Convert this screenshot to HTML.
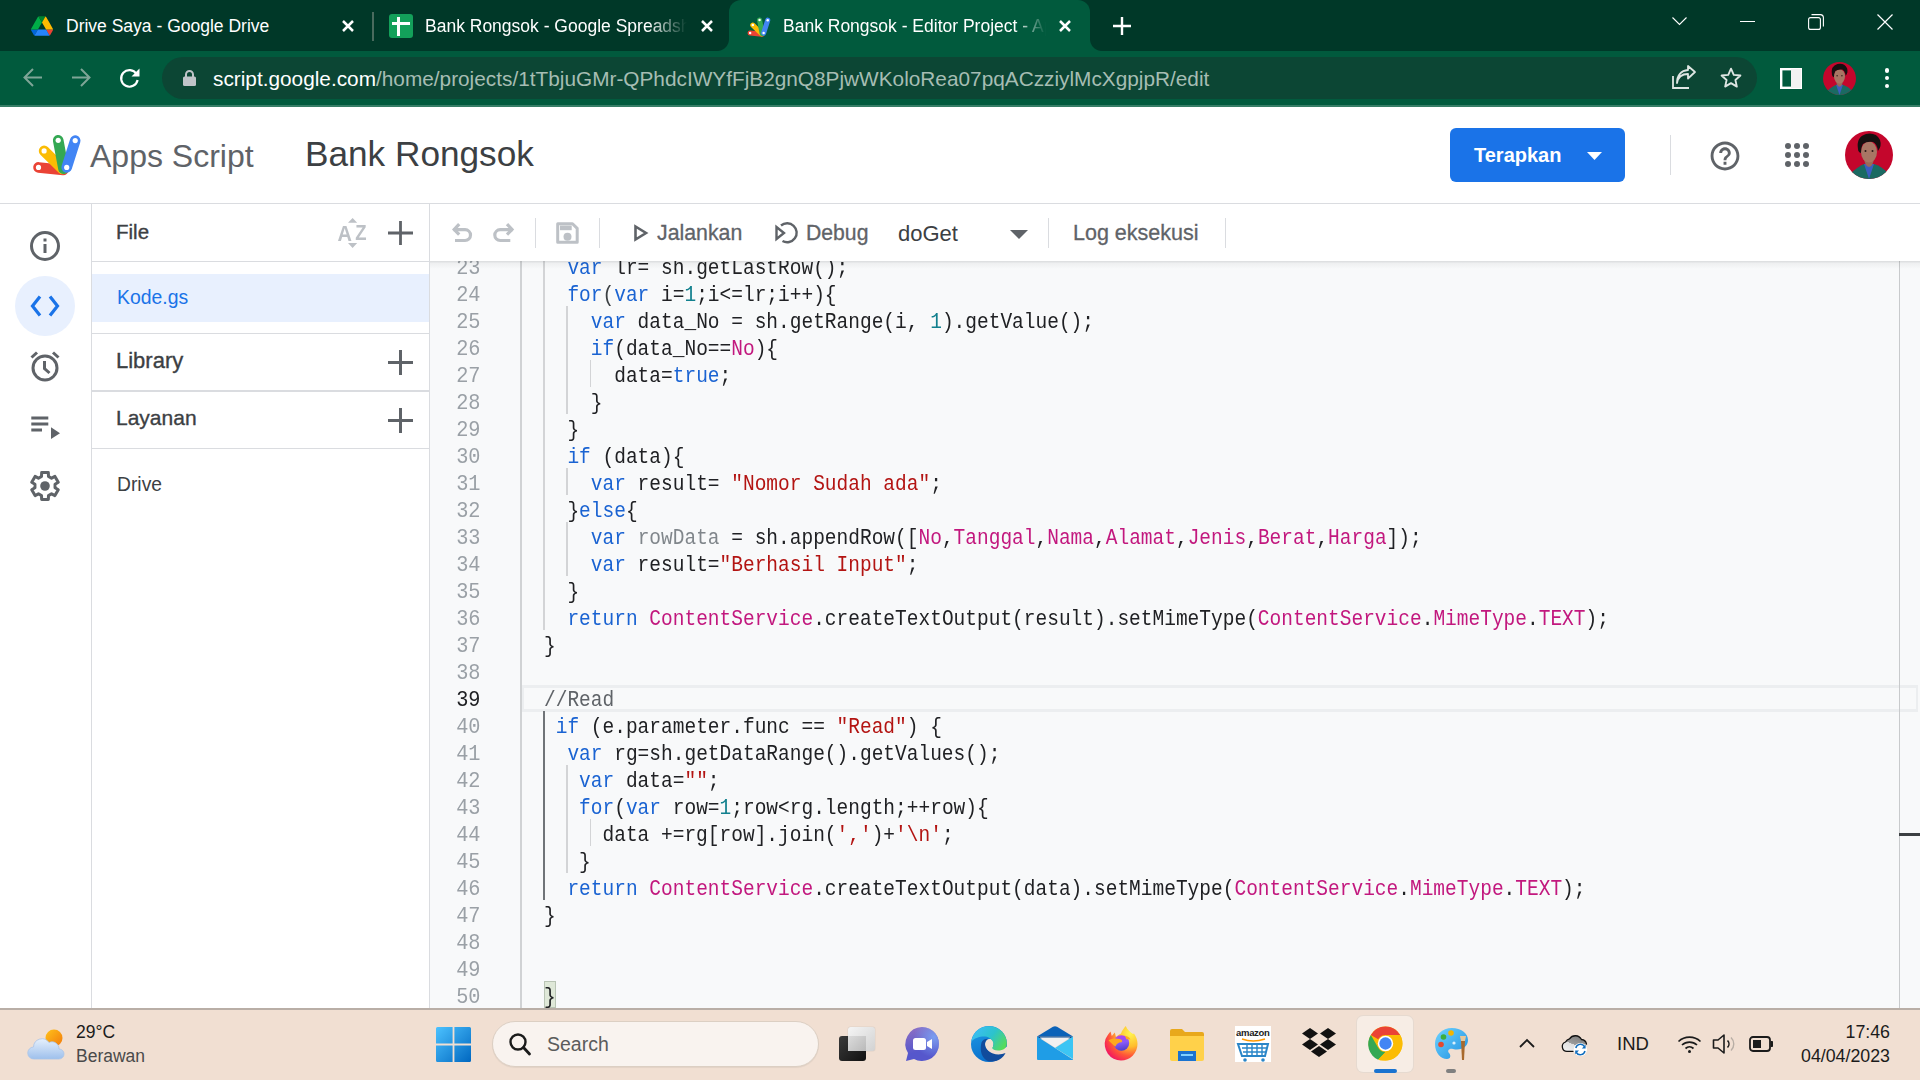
<!DOCTYPE html>
<html><head><meta charset="utf-8">
<style>
*{margin:0;padding:0;box-sizing:border-box}
html,body{width:1920px;height:1080px;overflow:hidden;background:#fff;font-family:"Liberation Sans",sans-serif}
.a{position:absolute}
svg{position:absolute;overflow:visible}
/* chrome */
#tabbar{left:0;top:0;width:1920px;height:51px;background:#003828}
#toolbar{left:0;top:51px;width:1920px;height:54px;background:#015a3d}
#tbline{left:0;top:105px;width:1920px;height:2px;background:#367d66}
.tabtxt{color:#fff;font-size:17.5px;white-space:nowrap;top:15px;line-height:22px}
#omni{left:162px;top:57px;width:1595px;height:42px;border-radius:21px;background:#0c4634}
/* app header */
#hdr{left:0;top:107px;width:1920px;height:97px;background:#fff;border-bottom:1px solid #dadce0}
/* rail + panel */
#rail{left:0;top:204px;width:92px;height:804px;background:#fff;border-right:1px solid #dadce0}
#panel{left:92px;top:204px;width:338px;height:804px;background:#fff;border-right:1px solid #dadce0}
.ph{color:#3c4043;font-size:20px;-webkit-text-stroke:0.35px #3c4043;white-space:nowrap}
.hl{left:0;width:337px;height:1px;background:#dadce0}
/* toolbar */
#etb{left:430px;top:204px;width:1490px;height:57px;background:#fff}
.tt{color:#5f6368;font-size:21.5px;white-space:nowrap;-webkit-text-stroke:0.3px #5f6368}
.sep{width:1px;background:#dadce0}
/* code */
#code{left:430px;top:261px;width:1490px;height:747px;background:#f8f9fa;overflow:hidden}
.ln{position:absolute;left:0;width:50.5px;text-align:right;font-family:"Liberation Mono",monospace;font-size:19.5px;color:#9aa0a6;line-height:27px;height:27px;transform:scale(1.04,1.15);transform-origin:100% 18.7px}
.cl{position:absolute;left:114px;font-family:"Liberation Mono",monospace;font-size:19.5px;color:#202124;line-height:27px;height:27px;white-space:pre;transform:scaleY(1.11);transform-origin:0 18.7px}
.k{color:#1a63d2}.s{color:#b31412}.m{color:#c2187e}.n{color:#12808e}.g{color:#80868b}.p{color:#3c4043}.c{color:#5f6368}
.guide{position:absolute;width:1.5px;background:#d3d4d6}
/* taskbar */
#task{left:0;top:1008px;width:1920px;height:72px;background:#f1dfd2;border-top:2px solid #b9aea6}
</style></head><body>

<!-- ================= CHROME TAB BAR ================= -->
<div id="tabbar" class="a"></div>
<!-- active tab -->
<div class="a" style="left:729px;top:0;width:361px;height:51px;background:#015a3d;border-radius:12px 12px 0 0"></div>
<div class="a" style="left:717px;top:39px;width:12px;height:12px;background:radial-gradient(circle at 0 0,#003828 11.5px,#015a3d 12.5px)"></div>
<div class="a" style="left:1090px;top:39px;width:12px;height:12px;background:radial-gradient(circle at 100% 0,#003828 11.5px,#015a3d 12.5px)"></div>


<!-- tab 1 -->
<svg style="left:31px;top:16px" width="22" height="20" viewBox="0 0 87.3 78">
<path d="m6.6 66.85 3.85 6.65c.8 1.4 1.95 2.5 3.3 3.3l13.75-23.8h-27.5c0 1.55.4 3.1 1.2 4.5z" fill="#0066da"/>
<path d="m43.65 25-13.75-23.8c-1.35.8-2.5 1.9-3.3 3.3l-25.4 44a9.06 9.06 0 0 0 -1.2 4.5h27.5z" fill="#00ac47"/>
<path d="m73.55 76.8c1.35-.8 2.5-1.9 3.3-3.3l1.6-2.75 7.65-13.25c.8-1.4 1.2-2.95 1.2-4.5h-27.502l5.852 11.5z" fill="#ea4335"/>
<path d="m43.65 25 13.75-23.8c-1.35-.8-2.9-1.2-4.5-1.2h-18.5c-1.6 0-3.15.45-4.5 1.2z" fill="#00832d"/>
<path d="m59.8 53h-32.3l-13.75 23.8c1.35.8 2.9 1.2 4.5 1.2h50.8c1.6 0 3.15-.45 4.5-1.2z" fill="#2684fc"/>
<path d="m73.4 26.5-12.7-22c-.8-1.4-1.95-2.5-3.3-3.3l-13.75 23.8 16.15 28h27.45c0-1.55-.4-3.1-1.2-4.5z" fill="#ffba00"/>
</svg>
<div class="a tabtxt" style="left:66px">Drive Saya - Google Drive</div>
<svg style="left:342px;top:20px" width="12" height="12" viewBox="0 0 12 12"><path d="M1 1L11 11M11 1L1 11" stroke="#fff" stroke-width="2.5"/></svg>
<div class="a" style="left:372px;top:12px;width:1.5px;height:29px;background:#4a6b5e"></div>
<!-- tab 2 -->
<div class="a" style="left:389px;top:14px;width:24px;height:24px;background:#13a05a;border-radius:3px"></div>
<div class="a" style="left:392px;top:22.2px;width:18px;height:2.8px;background:#fff"></div>
<div class="a" style="left:397px;top:17px;width:3.2px;height:19px;background:#fff"></div>
<div class="a tabtxt" style="left:425px;width:262px;overflow:hidden;-webkit-mask-image:linear-gradient(90deg,#000 85%,transparent)">Bank Rongsok - Google Spreadsheet</div>
<svg style="left:701px;top:20px" width="12" height="12" viewBox="0 0 12 12"><path d="M1 1L11 11M11 1L1 11" stroke="#fff" stroke-width="2.5"/></svg>
<!-- tab 3 (active) -->
<svg style="left:747px;top:17px" width="24" height="19.2" viewBox="0 0 50 40">
<g stroke-linecap="round" stroke-width="10.6">
<path d="M6.5 33.4L31.3 36" stroke="#ea4335"/>
<path d="M12.1 16.9L30.5 35" stroke="#fbbc04"/>
<path d="M26.2 6.3L31.5 34.7" stroke="#34a853"/>
<path d="M43.2 6.6L34.7 33.4" stroke="#4285f4"/>
</g>
<g fill="#fff"><circle cx="6.5" cy="33.4" r="2.6"/><circle cx="12.1" cy="16.9" r="2.6"/><circle cx="26.2" cy="6.3" r="2.6"/><circle cx="43.2" cy="6.6" r="2.6"/><circle cx="34.7" cy="33.4" r="2.6"/></g>
</svg>
<div class="a tabtxt" style="left:783px;width:263px;overflow:hidden;-webkit-mask-image:linear-gradient(90deg,#000 88%,transparent)">Bank Rongsok - Editor Project - Apps Script</div>
<svg style="left:1059px;top:20px" width="12" height="12" viewBox="0 0 12 12"><path d="M1 1L11 11M11 1L1 11" stroke="#fff" stroke-width="2.5"/></svg>
<svg style="left:1113px;top:17px" width="18" height="18" viewBox="0 0 18 18"><path d="M9 0V18M0 9H18" stroke="#fff" stroke-width="2.4"/></svg>
<!-- window controls -->
<svg style="left:1672px;top:16px" width="15" height="10" viewBox="0 0 15 10"><path d="M0.5 1.5L7.5 8.5L14.5 1.5" stroke="#fff" stroke-width="1.1" fill="none"/></svg>
<div class="a" style="left:1740px;top:21px;width:15px;height:1.2px;background:#fff"></div>
<svg style="left:1808px;top:14px" width="16" height="16" viewBox="0 0 16 16"><rect x="0.6" y="3.6" width="11.8" height="11.8" rx="2" stroke="#fff" stroke-width="1.1" fill="none"/><path d="M3.5 0.6H12.5A3 3 0 0 1 15.4 3.5V12.5" stroke="#fff" stroke-width="1.1" fill="none"/></svg>
<svg style="left:1877px;top:14px" width="16" height="16" viewBox="0 0 16 16"><path d="M0.5 0.5L15.5 15.5M15.5 0.5L0.5 15.5" stroke="#fff" stroke-width="1.2"/></svg>

<!-- ================= CHROME TOOLBAR ================= -->
<div id="toolbar" class="a"></div>
<div id="tbline" class="a"></div>
<svg style="left:23px;top:68px" width="20" height="19" viewBox="0 0 20 19"><path d="M19 9.5H2M10 1L1.5 9.5L10 18" stroke="#7fa597" stroke-width="2" fill="none"/></svg>
<svg style="left:71px;top:68px" width="20" height="19" viewBox="0 0 20 19"><path d="M1 9.5H18M10 1L18.5 9.5L10 18" stroke="#7fa597" stroke-width="2" fill="none"/></svg>
<svg style="left:119px;top:68px" width="22" height="20" viewBox="0 0 22 20"><path d="M17.5 6A8.3 8.3 0 1 0 18.6 12" stroke="#fff" stroke-width="2.2" fill="none"/><path d="M20.5 0.5V8.5H12.5Z" fill="#fff"/></svg>
<div id="omni" class="a"></div>
<svg style="left:183px;top:70px" width="13" height="16" viewBox="0 0 13 16"><path d="M3 7V4.5A3.5 3.5 0 0 1 10 4.5V7" stroke="#c0c4c8" stroke-width="2" fill="none"/><rect x="0" y="6.5" width="13" height="9.5" rx="1.5" fill="#c0c4c8"/></svg>
<div class="a" style="left:213px;top:67px;font-size:20.8px;line-height:24px;white-space:nowrap;color:#a6bdb3"><span style="color:#fff">script.google.com</span>/home/projects/1tTbjuGMr-QPhdcIWYfFjB2gnQ8PjwWKoloRea07pqACzziylMcXgpjpR/edit</div>
<svg style="left:1672px;top:66px" width="24" height="23" viewBox="0 0 24 23"><path d="M1 10V22H17" stroke="#dfe6e3" stroke-width="1.8" fill="none"/><path d="M5 17C6 11 10 8 16 8V12.5L23 6L16 0V4C9 4.5 5 9.5 5 17Z" stroke="#dfe6e3" stroke-width="1.8" fill="none" stroke-linejoin="round"/></svg>
<svg style="left:1720px;top:67px" width="22" height="22" viewBox="0 0 24 24"><path d="M12 1.8L15 8.6L22.3 9.3L16.8 14.2L18.4 21.4L12 17.6L5.6 21.4L7.2 14.2L1.7 9.3L9 8.6Z" stroke="#dfe6e3" stroke-width="2" fill="none" stroke-linejoin="round"/></svg>
<svg style="left:1780px;top:68px" width="22" height="21" viewBox="0 0 22 21"><rect x="1.2" y="1.2" width="19.6" height="18.6" stroke="#fff" stroke-width="2.4" fill="none"/><rect x="11" y="1" width="10" height="19" fill="#f2f2f2"/></svg>
<svg style="left:1823px;top:62px" width="33" height="33" viewBox="0 0 48 48">
<defs><clipPath id="avc2"><circle cx="24" cy="24" r="24"/></clipPath></defs>
<g clip-path="url(#avc2)">
<rect width="48" height="48" fill="#c4062c"/>
<path d="M3 48L6 42Q14 35 19 33H29Q36 35 43 42L46 48Z" fill="#1b6a62"/>
<path d="M19 33L24 48L29 33Z" fill="#3d5cc0"/>
<path d="M19 28Q20 35 24 36Q28 35 29 28Z" fill="#9a6a58"/>
<ellipse cx="24" cy="21" rx="8" ry="10.5" fill="#a87664"/>
<path d="M13 18Q11 6 21 3Q31 1 35 9Q37 15 33 20Q32 13 28 11Q22 10 18 13Q16 16 16 22Q13 21 13 18Z" fill="#151010"/>
<circle cx="20.5" cy="20" r="1" fill="#2a1a18"/><circle cx="27.5" cy="20" r="1" fill="#2a1a18"/>
</g></svg>
<div class="a" style="left:1884.7px;top:68px;width:4.6px;height:4.6px;border-radius:50%;background:#fff"></div>
<div class="a" style="left:1884.7px;top:75.7px;width:4.6px;height:4.6px;border-radius:50%;background:#fff"></div>
<div class="a" style="left:1884.7px;top:83.5px;width:4.6px;height:4.6px;border-radius:50%;background:#fff"></div>


<!-- ================= APP HEADER ================= -->
<div id="hdr" class="a"></div>
<svg style="left:32px;top:134px" width="50" height="40" viewBox="0 0 50 40">
<g stroke-linecap="round" stroke-width="10.6">
<path d="M6.5 33.4L31.3 36" stroke="#ea4335"/>
<path d="M12.1 16.9L30.5 35" stroke="#fbbc04"/>
<path d="M26.2 6.3L31.5 34.7" stroke="#34a853"/>
<path d="M43.2 6.6L34.7 33.4" stroke="#4285f4"/>
</g>
<g fill="#fff"><circle cx="6.5" cy="33.4" r="2.6"/><circle cx="12.1" cy="16.9" r="2.6"/><circle cx="26.2" cy="6.3" r="2.6"/><circle cx="43.2" cy="6.6" r="2.6"/><circle cx="34.7" cy="33.4" r="2.6"/></g>
</svg>
<div class="a" style="left:90px;top:136px;font-size:32px;line-height:40px;color:#5f6368;white-space:nowrap">Apps Script</div>
<div class="a" style="left:305px;top:132px;font-size:35.2px;line-height:44px;color:#3c4043;white-space:nowrap">Bank Rongsok</div>
<div class="a" style="left:1450px;top:128px;width:175px;height:54px;border-radius:6px;background:#1a73e8"></div>
<div class="a" style="left:1474px;top:143px;font-size:20px;font-weight:bold;line-height:24px;color:#fff;white-space:nowrap">Terapkan</div>
<svg style="left:1587px;top:152px" width="15" height="8" viewBox="0 0 15 8"><path d="M0 0H15L7.5 8Z" fill="#fff"/></svg>
<div class="a" style="left:1670px;top:135px;width:1px;height:40px;background:#dadce0"></div>
<svg style="left:1709px;top:140px" width="32" height="32" viewBox="0 0 24 24"><path fill="#5f6368" d="M11 18h2v-2h-2v2zm1-16C6.48 2 2 6.48 2 12s4.48 10 10 10 10-4.48 10-10S17.52 2 12 2zm0 18c-4.41 0-8-3.59-8-8s3.59-8 8-8 8 3.59 8 8-3.59 8-8 8zm0-14c-2.21 0-4 1.79-4 4h2c0-1.1.9-2 2-2s2 .9 2 2c0 2-3 1.75-3 5h2c0-2.25 3-2.5 3-5 0-2.21-1.79-4-4-4z" transform="translate(12 12) scale(1.08) translate(-12 -12)"/></svg>
<svg style="left:1785px;top:143px" width="24" height="24" viewBox="0 0 24 24"><g fill="#5f6368"><circle cx="3" cy="3" r="3"/><circle cx="12" cy="3" r="3"/><circle cx="21" cy="3" r="3"/><circle cx="3" cy="12" r="3"/><circle cx="12" cy="12" r="3"/><circle cx="21" cy="12" r="3"/><circle cx="3" cy="21" r="3"/><circle cx="12" cy="21" r="3"/><circle cx="21" cy="21" r="3"/></g></svg>
<svg style="left:1845px;top:131px" width="48" height="48" viewBox="0 0 48 48">
<defs><clipPath id="avc"><circle cx="24" cy="24" r="24"/></clipPath></defs>
<g clip-path="url(#avc)">
<rect width="48" height="48" fill="#c4062c"/>
<path d="M3 48L6 42Q14 35 19 33H29Q36 35 43 42L46 48Z" fill="#1b6a62"/>
<path d="M19 33L24 48L29 33Z" fill="#3d5cc0"/>
<path d="M19 28Q20 35 24 36Q28 35 29 28Z" fill="#9a6a58"/>
<ellipse cx="24" cy="21" rx="8" ry="10.5" fill="#a87664"/>
<path d="M13 18Q11 6 21 3Q31 1 35 9Q37 15 33 20Q32 13 28 11Q22 10 18 13Q16 16 16 22Q13 21 13 18Z" fill="#151010"/>
<circle cx="20.5" cy="20" r="1" fill="#2a1a18"/><circle cx="27.5" cy="20" r="1" fill="#2a1a18"/>
</g></svg>


<!-- ================= LEFT RAIL ================= -->
<div id="rail" class="a"></div>
<svg style="left:30px;top:231px" width="30" height="30" viewBox="0 0 30 30"><circle cx="15" cy="15" r="13.5" stroke="#5f6368" stroke-width="3" fill="none"/><rect x="13.5" y="13" width="3" height="9" fill="#5f6368"/><rect x="13.5" y="7.5" width="3" height="3" fill="#5f6368"/></svg>
<div class="a" style="left:15px;top:276px;width:60px;height:60px;border-radius:50%;background:#e8f0fe"></div>
<svg style="left:30px;top:294px" width="30" height="24" viewBox="0 0 30 24"><path d="M10 2.5L2.5 12L10 21.5M20 2.5L27.5 12L20 21.5" stroke="#1a73e8" stroke-width="3.2" fill="none"/></svg>
<svg style="left:29px;top:350px" width="32" height="32" viewBox="0 0 32 32"><circle cx="16" cy="18" r="12" stroke="#5f6368" stroke-width="3" fill="none"/><path d="M15.5 11V18.5L20.5 23" stroke="#5f6368" stroke-width="3" fill="none"/><path d="M2.5 7.5L8 2.5M29.5 7.5L24 2.5" stroke="#5f6368" stroke-width="3"/></svg>
<svg style="left:31px;top:416px" width="30" height="24" viewBox="0 0 30 24"><path d="M0.3 2.1H17.3M0.3 8.1H17.3M0.3 14.1H11" stroke="#5f6368" stroke-width="3"/><path d="M20 11.3V23L29 17.15Z" fill="#5f6368"/></svg>
<svg style="left:27px;top:468px" width="36" height="36" viewBox="0 0 36 36"><path d="M21.49 8.42L21.34 4.61L14.66 4.61L14.51 8.42L11.44 10.19L8.07 8.41L4.73 14.20L7.95 16.23L7.95 19.77L4.73 21.80L8.07 27.59L11.44 25.81L14.51 27.58L14.66 31.39L21.34 31.39L21.49 27.58L24.56 25.81L27.93 27.59L31.27 21.80L28.05 19.77L28.05 16.23L31.27 14.20L27.93 8.41L24.56 10.19Z" stroke="#5f6368" stroke-width="3" fill="none" stroke-linejoin="round"/><circle cx="18" cy="18" r="4.8" fill="#5f6368"/></svg>

<!-- ================= FILE PANEL ================= -->
<div id="panel" class="a">
<div class="a ph" style="left:24px;top:16px;line-height:24px;font-size:20.5px">File</div>
<div class="a" style="left:245.5px;top:17.6px;font-size:20px;font-weight:bold;color:#bdc1c6;line-height:24px;transform:scaleY(1.12);transform-origin:0 19px">A</div><div class="a" style="left:263.3px;top:17.6px;font-size:18.5px;font-weight:bold;color:#bdc1c6;line-height:24px;transform:scale(1,1.2);transform-origin:0 19px">Z</div>
<svg style="left:256px;top:10px" width="10" height="34" viewBox="0 0 10 34"><path d="M0 8.8L4.6 4L9.2 8.8Z M0 29L4.6 33.9L9.2 29Z" fill="#bdc1c6"/></svg>
<svg style="left:296px;top:17px" width="25" height="24" viewBox="0 0 25 24"><path d="M12.5 0V24M0 12H25" stroke="#5f6368" stroke-width="2.8"/></svg>
<div class="hl a" style="top:57px"></div>
<div class="a" style="left:0;top:70px;width:337px;height:48px;background:#e8f0fe"></div>
<div class="a" style="left:25px;top:81px;font-size:19.4px;line-height:24px;color:#1a73e8;white-space:nowrap">Kode.gs</div>
<div class="hl a" style="top:129px"></div>
<div class="a ph" style="left:24px;top:145px;line-height:24px;font-size:22px">Library</div>
<svg style="left:296px;top:146px" width="25" height="25" viewBox="0 0 25 25"><path d="M12.5 0V25M0 12.5H25" stroke="#5f6368" stroke-width="3"/></svg>
<div class="hl a" style="top:186px;height:2px"></div>
<div class="a ph" style="left:24px;top:202px;line-height:24px;font-size:21px">Layanan</div>
<svg style="left:296px;top:204px" width="25" height="25" viewBox="0 0 25 25"><path d="M12.5 0V25M0 12.5H25" stroke="#5f6368" stroke-width="3"/></svg>
<div class="hl a" style="top:244px"></div>
<div class="a" style="left:25px;top:269px;font-size:19.3px;line-height:24px;color:#3c4043;white-space:nowrap">Drive</div>
</div>

<!-- ================= EDITOR TOOLBAR ================= -->
<div id="etb" class="a"></div>
<svg style="left:0;top:0" width="1" height="1" viewBox="0 0 1 1"><g stroke="#bdc1c6" stroke-width="3.2" fill="none">
<path d="M459.2 224.1L454.2 229.4L459.2 234.6"/><path d="M453.5 229.7H465.1A5.4 5.4 0 0 1 465.1 240.5H455"/>
<path d="M507 224.1L512 229.4L507 234.6"/><path d="M512.7 229.7H500.2A5.4 5.4 0 0 0 500.2 240.5H510.3"/>
</g>
<path d="M557.7 223.7H572.5L577.2 228.4V242.2H557.7Z" stroke="#bdc1c6" stroke-width="3" fill="none" stroke-linejoin="round"/>
<rect x="560" y="225.5" width="11.7" height="4.7" fill="#bdc1c6"/><circle cx="567.5" cy="236.7" r="4" fill="#bdc1c6"/>
</svg>
<div class="a sep" style="left:535px;top:218px;height:30px"></div>
<div class="a sep" style="left:599px;top:218px;height:30px"></div>
<svg style="left:634px;top:224px" width="14" height="18" viewBox="0 0 14 18"><path d="M1.5 2.5V15.5L12 9Z" stroke="#5f6368" stroke-width="2.6" fill="none" stroke-linejoin="miter"/></svg>
<div class="a tt" style="left:657px;top:221px;line-height:24px;font-size:21.3px">Jalankan</div>
<svg style="left:775px;top:222px" width="23" height="22" viewBox="0 0 23 22"><path d="M1.5 5V17L9 11Z" stroke="#5f6368" stroke-width="2.4" fill="none"/><path d="M6 3.5A9.5 9.5 0 1 1 7.5 19" stroke="#5f6368" stroke-width="2.4" fill="none"/></svg>
<div class="a tt" style="left:806px;top:221px;line-height:24px;font-size:21.2px">Debug</div>
<div class="a" style="left:898px;top:222px;line-height:24px;font-size:22px;color:#3c4043;white-space:nowrap">doGet</div>
<svg style="left:1010px;top:230px" width="18" height="9" viewBox="0 0 18 9"><path d="M0 0H18L9 9Z" fill="#5f6368"/></svg>
<div class="a sep" style="left:1048px;top:218px;height:30px"></div>
<div class="a tt" style="left:1073px;top:221px;line-height:24px;font-size:21.5px">Log eksekusi</div>
<div class="a sep" style="left:1225px;top:218px;height:30px"></div>

<!-- ================= CODE ================= -->
<div id="code" class="a">
<div class="a" style="left:91px;top:424px;width:1397px;height:27px;border:3px solid #eceef0;border-right-width:2px"></div>
<div class="a" style="left:114px;top:720px;width:12px;height:27px;background:#dfe8d8;border:1px solid #b9c4b4"></div>
<div class="ln" style="top:-5px;color:#9aa0a6">23</div>
<div class="cl" style="top:-5px">  <span class="k">var</span> lr= sh.getLastRow();</div>
<div class="ln" style="top:22px;color:#9aa0a6">24</div>
<div class="cl" style="top:22px">  <span class="k">for</span><span class="p">(</span><span class="k">var</span> i=<span class="n">1</span>;i&lt;=lr;i++){</div>
<div class="ln" style="top:49px;color:#9aa0a6">25</div>
<div class="cl" style="top:49px">    <span class="k">var</span> data_No = sh.getRange(i, <span class="n">1</span>).getValue();</div>
<div class="ln" style="top:76px;color:#9aa0a6">26</div>
<div class="cl" style="top:76px">    <span class="k">if</span>(data_No==<span class="m">No</span>){</div>
<div class="ln" style="top:103px;color:#9aa0a6">27</div>
<div class="cl" style="top:103px">      data=<span class="k">true</span>;</div>
<div class="ln" style="top:130px;color:#9aa0a6">28</div>
<div class="cl" style="top:130px">    }</div>
<div class="ln" style="top:157px;color:#9aa0a6">29</div>
<div class="cl" style="top:157px">  }</div>
<div class="ln" style="top:184px;color:#9aa0a6">30</div>
<div class="cl" style="top:184px">  <span class="k">if</span> (data){</div>
<div class="ln" style="top:211px;color:#9aa0a6">31</div>
<div class="cl" style="top:211px">    <span class="k">var</span> result= <span class="s">"Nomor Sudah ada"</span>;</div>
<div class="ln" style="top:238px;color:#9aa0a6">32</div>
<div class="cl" style="top:238px">  }<span class="k">else</span>{</div>
<div class="ln" style="top:265px;color:#9aa0a6">33</div>
<div class="cl" style="top:265px">    <span class="k">var</span> <span class="g">rowData</span> = sh.appendRow([<span class="m">No</span>,<span class="m">Tanggal</span>,<span class="m">Nama</span>,<span class="m">Alamat</span>,<span class="m">Jenis</span>,<span class="m">Berat</span>,<span class="m">Harga</span>]);</div>
<div class="ln" style="top:292px;color:#9aa0a6">34</div>
<div class="cl" style="top:292px">    <span class="k">var</span> result=<span class="s">"Berhasil Input"</span>;</div>
<div class="ln" style="top:319px;color:#9aa0a6">35</div>
<div class="cl" style="top:319px">  }</div>
<div class="ln" style="top:346px;color:#9aa0a6">36</div>
<div class="cl" style="top:346px">  <span class="k">return</span> <span class="m">ContentService</span>.createTextOutput(result).setMimeType(<span class="m">ContentService</span>.<span class="m">MimeType</span>.<span class="m">TEXT</span>);</div>
<div class="ln" style="top:373px;color:#9aa0a6">37</div>
<div class="cl" style="top:373px">}</div>
<div class="ln" style="top:400px;color:#9aa0a6">38</div>
<div class="cl" style="top:400px"></div>
<div class="ln" style="top:427px;color:#202124">39</div>
<div class="cl" style="top:427px"><span class="c">//Read</span></div>
<div class="ln" style="top:454px;color:#9aa0a6">40</div>
<div class="cl" style="top:454px"> <span class="k">if</span> (e.parameter.func == <span class="s">"Read"</span>) {</div>
<div class="ln" style="top:481px;color:#9aa0a6">41</div>
<div class="cl" style="top:481px">  <span class="k">var</span> rg=sh.getDataRange().getValues();</div>
<div class="ln" style="top:508px;color:#9aa0a6">42</div>
<div class="cl" style="top:508px">   <span class="k">var</span> data=<span class="s">""</span>;</div>
<div class="ln" style="top:535px;color:#9aa0a6">43</div>
<div class="cl" style="top:535px">   <span class="k">for</span>(<span class="k">var</span> row=<span class="n">1</span>;row&lt;rg.length;++row){</div>
<div class="ln" style="top:562px;color:#9aa0a6">44</div>
<div class="cl" style="top:562px">     data +=rg[row].join(<span class="s">','</span>)+<span class="s">'\n'</span>;</div>
<div class="ln" style="top:589px;color:#9aa0a6">45</div>
<div class="cl" style="top:589px">   }</div>
<div class="ln" style="top:616px;color:#9aa0a6">46</div>
<div class="cl" style="top:616px">  <span class="k">return</span> <span class="m">ContentService</span>.createTextOutput(data).setMimeType(<span class="m">ContentService</span>.<span class="m">MimeType</span>.<span class="m">TEXT</span>);</div>
<div class="ln" style="top:643px;color:#9aa0a6">47</div>
<div class="cl" style="top:643px">}</div>
<div class="ln" style="top:670px;color:#9aa0a6">48</div>
<div class="cl" style="top:670px"></div>
<div class="ln" style="top:697px;color:#9aa0a6">49</div>
<div class="cl" style="top:697px"></div>
<div class="ln" style="top:724px;color:#9aa0a6">50</div>
<div class="cl" style="top:724px">}</div>
<div class="guide" style="left:90px;top:0;height:747px;background:#d0d2d4"></div>
<div class="guide" style="left:113.0px;top:-9px;height:378px"></div>
<div class="guide" style="left:136.4px;top:45px;height:108px"></div>
<div class="guide" style="left:136.4px;top:207px;height:27px"></div>
<div class="guide" style="left:136.4px;top:261px;height:54px"></div>
<div class="guide" style="left:159.8px;top:99px;height:27px"></div>
<div class="guide" style="left:113.0px;top:450px;height:189px;background:#707478"></div>
<div class="guide" style="left:136.4px;top:504px;height:108px"></div>
<div class="guide" style="left:159.8px;top:558px;height:27px"></div>
<div class="guide" style="left:1469px;top:0;height:747px;background:#c8cacc;width:1px"></div>
<div class="a" style="left:1469px;top:572px;width:21px;height:3px;background:#3c4043"></div>
<div class="a" style="left:0;top:0;width:1490px;height:8px;background:linear-gradient(rgba(60,64,67,0.16),rgba(60,64,67,0.05) 30%,rgba(60,64,67,0))"></div>
</div>


<!-- ================= TASKBAR ================= -->
<div id="task" class="a"></div>
<!-- weather -->
<svg style="left:28px;top:1028px" width="38" height="32" viewBox="0 0 38 32">
<defs><linearGradient id="sun" x1="0" y1="0" x2="1" y2="1"><stop offset="0" stop-color="#ffc21a"/><stop offset="1" stop-color="#f27a0c"/></linearGradient>
<linearGradient id="cld" x1="0" y1="0" x2="0" y2="1"><stop offset="0" stop-color="#e6f0fc"/><stop offset="1" stop-color="#9ec0ec"/></linearGradient></defs>
<circle cx="26" cy="10" r="8.5" fill="url(#sun)"/>
<path d="M6 31A6 6 0 0 1 5.5 19A8.5 8.5 0 0 1 21 14.5A7 7 0 0 1 31 21A5 5 0 0 1 31 31Z" fill="url(#cld)" stroke="#a9c4e8" stroke-width="0.8"/>
</svg>
<div class="a" style="left:76px;top:1021px;font-size:17.5px;line-height:22px;color:#1b1b1b;white-space:nowrap">29°C</div>
<div class="a" style="left:76px;top:1045px;font-size:17.5px;line-height:22px;color:#4a4a4a;white-space:nowrap">Berawan</div>
<!-- start -->
<svg style="left:436px;top:1027px" width="35" height="35" viewBox="0 0 35 35">
<defs><linearGradient id="win" x1="0" y1="0" x2="1" y2="1"><stop offset="0" stop-color="#4cc2ff"/><stop offset="1" stop-color="#0067c0"/></linearGradient></defs>
<path d="M1.5 0H16.6V16.6H0V1.5A1.5 1.5 0 0 1 1.5 0ZM18.4 0H33.5A1.5 1.5 0 0 1 35 1.5V16.6H18.4ZM0 18.4H16.6V35H1.5A1.5 1.5 0 0 1 0 33.5ZM18.4 18.4H35V33.5A1.5 1.5 0 0 1 33.5 35H18.4Z" fill="url(#win)"/>
</svg>
<!-- search -->
<div class="a" style="left:492px;top:1021px;width:327px;height:46px;border-radius:23px;background:#f9f3ef;border:1px solid #dccfc3;box-shadow:0 1px 1px rgba(0,0,0,0.06)"></div>
<svg style="left:509px;top:1033px" width="22" height="23" viewBox="0 0 22 23"><circle cx="9" cy="9" r="7.5" stroke="#1b1b1b" stroke-width="2.4" fill="none"/><path d="M14.5 14.5L20.5 21" stroke="#1b1b1b" stroke-width="2.8" stroke-linecap="round"/></svg>
<div class="a" style="left:547px;top:1033px;font-size:19.5px;line-height:22px;color:#5b5b5b;white-space:nowrap">Search</div>
<!-- task view -->
<div class="a" style="left:848px;top:1027px;width:27px;height:24px;border-radius:3px;background:linear-gradient(135deg,#f5f5f5,#d2d2d2);box-shadow:0 0 1px #999"></div>
<div class="a" style="left:839px;top:1036px;width:27px;height:25px;border-radius:3px;background:linear-gradient(135deg,#3a3a3a,#111)"></div>
<div class="a" style="left:848px;top:1036px;width:18px;height:15px;background:linear-gradient(135deg,#dcdcdc,#b9b9b9)"></div>
<!-- teams -->
<svg style="left:904px;top:1026px" width="36" height="36" viewBox="0 0 36 36">
<defs><linearGradient id="tm" x1="0.2" y1="0" x2="0.4" y2="1"><stop offset="0" stop-color="#8d6fc4"/><stop offset="0.75" stop-color="#5657cc"/></linearGradient><radialGradient id="tm2" cx="0.85" cy="0.3" r="0.6"><stop offset="0" stop-color="#7aa0f2" stop-opacity="0.95"/><stop offset="1" stop-color="#7aa0f2" stop-opacity="0"/></radialGradient></defs>
<path d="M18 1A17 17 0 1 1 10 33L2 35L4 27A17 17 0 0 1 18 1Z" fill="url(#tm)"/><path d="M18 1A17 17 0 1 1 10 33L2 35L4 27A17 17 0 0 1 18 1Z" fill="url(#tm2)"/>
<rect x="9" y="12" width="13" height="12" rx="2.5" fill="#fff"/><path d="M23 16L28 13V23L23 20Z" fill="#fff"/>
</svg>
<!-- edge -->
<svg style="left:971px;top:1026px" width="36" height="36" viewBox="0 0 36 36">
<defs><linearGradient id="egL" x1="0" y1="0" x2="0.3" y2="1"><stop offset="0" stop-color="#1e9be6"/><stop offset="1" stop-color="#0a70cc"/></linearGradient>
<linearGradient id="egC" x1="0" y1="0.3" x2="1" y2="0.8"><stop offset="0" stop-color="#3cbdf5"/><stop offset="0.5" stop-color="#2cc3cc"/><stop offset="1" stop-color="#5ade4e"/></linearGradient></defs>
<circle cx="18" cy="18" r="18" fill="url(#egL)"/>
<path d="M14 18C14 15 16 13 18.5 13C21 13 23 15 22.5 18C22 20.5 22 22.5 24 23.5C28 25 33 23 37 20L37 30C30 31 22 30 18 26C15 23.5 14 21 14 18Z" fill="#f1dfd2"/>
<path d="M10.5 16.5C9 22 9.5 30 15 34C19 36.5 26 36 30 32.5C32 31 33.5 29 34.5 27C31 28.5 26 29 22 27.5C17 25.5 14 22 14 18C14 15.5 15.5 13.5 17.5 12.8C14 12.5 11.5 14 10.5 16.5Z" fill="#114b9c"/>
<path d="M0.3 15.5C2 6 9 0.2 18 0.2C28 0.2 35.8 8 35.8 17C35.8 22 32.5 24.5 27 24.5C23.5 24.5 21.5 23 21 22C22.5 20.5 23 18.5 22 16C20.5 12.5 17 10.5 13 10.5C8 10.5 3 12.5 0.3 15.5Z" fill="url(#egC)"/>
</svg>
<!-- mail -->
<svg style="left:1037px;top:1026px" width="36" height="34" viewBox="0 0 36 34">
<path d="M0 10.5L16 0.8Q18 -0.3 20 0.8L36 10.5Z" fill="#0b62b8"/>
<path d="M0 10.5H36L34 12.5H2Z" fill="#07478e"/>
<path d="M2.8 11.5H33.2L18 21.5Z" fill="#f1f1f1"/>
<path d="M0 10.5L36 33.5V34H1Q0 34 0 33Z" fill="#1f9de6"/>
<path d="M36 10.5V33L18 22Z" fill="#3cc5f4"/>
</svg>
<!-- firefox -->
<svg style="left:1104px;top:1026px" width="34" height="35" viewBox="0 0 34 35">
<defs><radialGradient id="ffb" cx="0.78" cy="0.22" r="0.95"><stop offset="0" stop-color="#fff44f"/><stop offset="0.4" stop-color="#ffbd2e"/><stop offset="0.68" stop-color="#ff5638"/><stop offset="0.9" stop-color="#f5215a"/><stop offset="1" stop-color="#e0107a"/></radialGradient>
<linearGradient id="ffg" x1="0.3" y1="0" x2="0.5" y2="1"><stop offset="0" stop-color="#b83cf0"/><stop offset="0.5" stop-color="#8a5af7"/><stop offset="1" stop-color="#4e3ec9"/></linearGradient></defs>
<path d="M17 34.5A16.5 16.5 0 0 1 1.5 13C3 10 4.5 8 6.5 5.5L7.8 10L10.8 6.5L12 11C14 9 16 8 17 7.5C18 4.5 20 2 21.8 0C23 3.5 26 6 29 8L30 7.5C32.5 11 33.5 14.5 33.5 18A16.5 16.5 0 0 1 17 34.5Z" fill="url(#ffb)"/>
<circle cx="17.4" cy="17" r="7.8" fill="url(#ffg)"/>
<path d="M4.5 14.3C7.5 12.5 12 12 15.5 13C18 13.5 19 15 17.5 16.3C14.5 16.3 12.3 18 11.5 20.5C9 19 6.5 16.5 4.5 14.3Z" fill="#ffa91f"/>
<path d="M21 9.8C23.5 10.2 25.5 11.5 26.5 13.5C25 13 23.5 13 22.5 13.5Z" fill="#ffa91f"/>
</svg>
<!-- folder -->
<svg style="left:1169px;top:1026px" width="36" height="36" viewBox="0 0 36 36">
<path d="M1 5A2 2 0 0 1 3 3H13L16 6H33A2 2 0 0 1 35 8V12H1Z" fill="#e8a81c"/>
<path d="M1 10H35V33A2 2 0 0 1 33 35H3A2 2 0 0 1 1 33Z" fill="#ffd14a"/>
<path d="M9 25H27V35H9Z" fill="#1a73d0"/><path d="M12 28H24V30H12Z" fill="#7fd0ff"/>
</svg>
<!-- amazon -->
<div class="a" style="left:1235px;top:1026px;width:36px;height:36px;background:#fff"></div>
<div class="a" style="left:1236px;top:1028px;font-size:9.5px;font-weight:bold;color:#222;line-height:10px;letter-spacing:-0.3px">amazon</div>
<svg style="left:1236px;top:1037px" width="34" height="25" viewBox="0 0 34 25"><path d="M6 2Q17 6 29 2" stroke="#ff9900" stroke-width="1.6" fill="none"/><path d="M2 7H32L29 19H6Z" fill="none" stroke="#2a86c8" stroke-width="2"/><path d="M6 11H31M7 15H30M11 7V19M16 7V19M21 7V19M26 7V19" stroke="#2a86c8" stroke-width="1.4"/><circle cx="9" cy="23" r="1.8" fill="#2a86c8"/><circle cx="27" cy="23" r="1.8" fill="#2a86c8"/></svg>
<!-- dropbox -->
<svg style="left:1301px;top:1027px" width="36" height="33" viewBox="0 0 36 33"><g fill="#111"><path d="M9 1L1 6.5L9 12L17 6.5Z"/><path d="M27 1L19 6.5L27 12L35 6.5Z"/><path d="M1 17.5L9 12L17 17.5L9 23Z"/><path d="M35 17.5L27 12L19 17.5L27 23Z"/><path d="M18 19L10 24.5L18 30L26 24.5Z"/></g></svg>
<!-- chrome (active) -->
<div class="a" style="left:1357px;top:1016px;width:56px;height:56px;border-radius:6px;background:#f7ede5;box-shadow:0 0 0 1px #e6dad0"></div>
<svg style="left:1367px;top:1025px" width="37" height="37" viewBox="0 0 48 48">
<circle cx="24" cy="24" r="22" fill="#fbbc04"/>
<path d="M24 2A22 22 0 0 1 43 13H24A11 11 0 0 0 14.5 18.5L5 13A22 22 0 0 1 24 2Z" fill="#ea4335"/>
<path d="M5 13L14.5 29.5A11 11 0 0 0 24 35L14.5 45A22 22 0 0 1 5 13Z" fill="#34a853"/>
<path d="M14.5 45L24 35A11 11 0 0 0 33.5 18.5L43 13A22 22 0 0 1 24 46A22 22 0 0 1 14.5 45Z" fill="#fbbc04"/>
<circle cx="24" cy="24" r="10" fill="#fff"/><circle cx="24" cy="24" r="8" fill="#4285f4"/>
</svg>
<div class="a" style="left:1374px;top:1069px;width:23px;height:4px;border-radius:2px;background:#1a73d0"></div>
<!-- paint -->
<svg style="left:1434px;top:1026px" width="36" height="36" viewBox="0 0 36 36">
<defs><linearGradient id="pt" x1="0" y1="0" x2="1" y2="1"><stop offset="0" stop-color="#6fd3ff"/><stop offset="1" stop-color="#1e8fe0"/></linearGradient></defs>
<path d="M18 2C8 2 1 9 1 18C1 27 7 33 13 33C17 33 17 29 15 27C13 25 15 22 19 23C27 25 34 21 34 14C34 7 27 2 18 2Z" fill="url(#pt)"/>
<circle cx="7" cy="18.5" r="2.8" fill="#e4492f"/><circle cx="9.5" cy="11" r="2.8" fill="#3fae3c"/><circle cx="17" cy="7" r="2.8" fill="#f5b400"/><circle cx="20" cy="17" r="1.6" fill="#fff" opacity="0.8"/>
<path d="M26 10H32L31 15H27Z" fill="#e8c79a"/><path d="M27 15H31L30 34H28Z" fill="#a86a2e"/>
</svg>
<div class="a" style="left:1446px;top:1069px;width:10px;height:4px;border-radius:2px;background:#808080"></div>
<!-- tray -->
<svg style="left:1519px;top:1038px" width="16" height="10" viewBox="0 0 16 10"><path d="M1 9L8 2L15 9" stroke="#1b1b1b" stroke-width="1.8" fill="none"/></svg>
<svg style="left:1555px;top:1025px" width="40" height="35" viewBox="0 0 40 35">
<defs><linearGradient id="od" x1="0.8" y1="0" x2="0.2" y2="1"><stop offset="0" stop-color="#7a7a7a"/><stop offset="0.55" stop-color="#9c9c9c"/><stop offset="0.56" stop-color="#e0e0e0"/><stop offset="1" stop-color="#f0f0f0"/></linearGradient></defs>
<path d="M18 26.3H12.5A4.8 4.8 0 0 1 10.5 17A7 7 0 0 1 14.5 13.8A7 7 0 0 1 26.5 14.5A5.5 5.5 0 0 1 31.5 19" fill="url(#od)" stroke="#111" stroke-width="1.3" stroke-linecap="round"/>
<circle cx="25.4" cy="24.5" r="6.6" fill="#fff"/>
<path d="M20.8 23A4.8 4.8 0 0 1 29.5 21.5M30 26A4.8 4.8 0 0 1 21.3 27.5" stroke="#0f6cbd" stroke-width="1.5" fill="none"/>
<path d="M30.6 19.8V23.6H26.8Z M20.2 29.2V25.4H24Z" fill="#0f6cbd"/>
</svg>
<div class="a" style="left:1617px;top:1034px;font-size:18.5px;line-height:20px;color:#1b1b1b;white-space:nowrap">IND</div>
<svg style="left:1677px;top:1035px" width="25" height="18" viewBox="0 0 25 18"><path d="M1.5 6.5A16 16 0 0 1 23.5 6.5M5 10A11 11 0 0 1 20 10M8.5 13.5A6 6 0 0 1 16.5 13.5" stroke="#1b1b1b" stroke-width="1.7" fill="none"/><circle cx="12.5" cy="16.5" r="1.5" fill="#1b1b1b"/></svg>
<svg style="left:1712px;top:1033px" width="26" height="22" viewBox="0 0 26 22"><path d="M1.5 7H6L12 2V20L6 15H1.5Z" stroke="#1b1b1b" stroke-width="1.6" fill="none" stroke-linejoin="round"/><path d="M15.5 7.5A5 5 0 0 1 15.5 14.5" stroke="#1b1b1b" stroke-width="1.6" fill="none"/><path d="M19 4.5A9 9 0 0 1 19 17.5" stroke="#b8aea5" stroke-width="1.4" fill="none"/></svg>
<svg style="left:1749px;top:1036px" width="25" height="16" viewBox="0 0 25 16"><rect x="1" y="1" width="20" height="14" rx="3" stroke="#1b1b1b" stroke-width="1.8" fill="none"/><rect x="4" y="4" width="8" height="8" fill="#1b1b1b"/><path d="M22 5.5H23.5V10.5H22Z" fill="#1b1b1b" stroke="#1b1b1b" stroke-width="1"/></svg>
<div class="a" style="left:1790px;top:1021px;width:100px;text-align:right;font-size:17.8px;line-height:22px;color:#1b1b1b;white-space:nowrap">17:46</div>
<div class="a" style="left:1770px;top:1045px;width:120px;text-align:right;font-size:17.8px;line-height:22px;color:#1b1b1b;white-space:nowrap">04/04/2023</div>

</body></html>
